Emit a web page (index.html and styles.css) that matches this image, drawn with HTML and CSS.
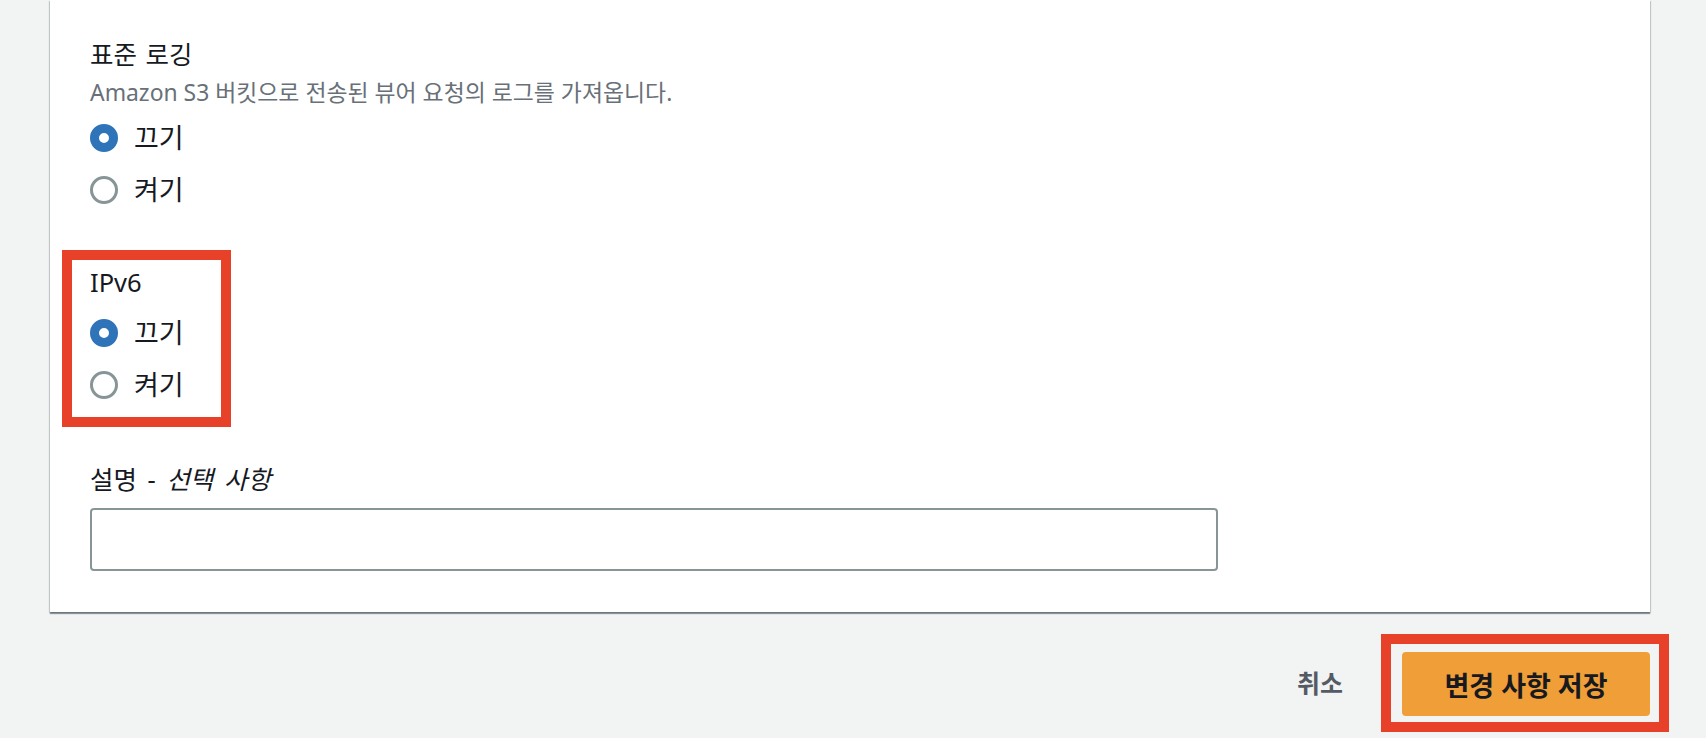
FILE: index.html
```html
<!DOCTYPE html>
<html lang="ko">
<head>
<meta charset="utf-8">
<title>배포 설정 편집</title>
<link rel="stylesheet" href="styles.css">
</head>
<body>
<div class="page">
  <section class="card">
    <div class="field">
      <div class="label">표준 로깅</div>
      <div class="desc">Amazon S3 버킷으로 전송된 뷰어 요청의 로그를 가져옵니다.</div>
      <div class="radios">
        <label class="radio-row"><input class="radio" type="radio" name="logging" checked><span>끄기</span></label>
        <label class="radio-row"><input class="radio" type="radio" name="logging"><span>켜기</span></label>
      </div>
    </div>

    <div class="field highlight">
      <div class="label">IPv6</div>
      <div class="radios tight">
        <label class="radio-row"><input class="radio" type="radio" name="ipv6" checked><span>끄기</span></label>
        <label class="radio-row"><input class="radio" type="radio" name="ipv6"><span>켜기</span></label>
      </div>
    </div>

    <div class="field comment">
      <div class="label label-wide">설명 - <em>선택 사항</em></div>
      <input class="text-input" type="text">
    </div>
  </section>

  <div class="actions">
    <button class="btn-link" type="button">취소</button>
    <div class="highlight-btn">
      <button class="btn-primary" type="button">변경 사항 저장</button>
    </div>
  </div>
</div>
</body>
</html>
```

FILE: styles.css
```css
html, body {
  margin: 0;
  padding: 0;
  height: 100%;
  overflow: hidden;
  background: #f2f3f3;
}

body {
  font-family: "Noto Sans", "Noto Sans CJK KR", sans-serif;
  color: #16191f;
}

.page {
  padding: 0 56px 0 50px;
}

.card {
  background: #ffffff;
  padding: 38px 40px 41px 40px;
  box-shadow: 0 2px 1px rgba(0, 28, 36, 0.4),
              1px 1px 1px rgba(0, 28, 36, 0.15),
              -1px 1px 1px rgba(0, 28, 36, 0.15);
}

.field {
  display: flex;
  flex-direction: column;
  align-items: flex-start;
}

.label {
  font-size: 25.5px;
  line-height: 32px;
  color: #16191f;
  word-spacing: 2px;
}

.label-wide {
  word-spacing: 4px;
}

.label em {
  font-style: italic;
}

.desc {
  margin-top: 8px;
  font-size: 22.9px;
  line-height: 30px;
  color: #687078;
}

.radios {
  margin-top: 4px;
  display: flex;
  flex-direction: column;
}

.radios.tight {
  margin-top: 9px;
}

.radio-row {
  height: 52px;
  display: flex;
  align-items: center;
  gap: 16px;
  font-size: 27px;
  line-height: 32px;
  color: #16191f;
}

.radio {
  appearance: none;
  -webkit-appearance: none;
  box-sizing: border-box;
  width: 28px;
  height: 28px;
  margin: 0;
  border-radius: 50%;
  border: 3px solid #879596;
  background: #ffffff;
}

.radio:checked {
  border: 9px solid #2f73b9;
}

.highlight {
  box-sizing: border-box;
  width: 169px;
  margin-top: 34px;
  margin-left: -28px;
  padding: 6px 10px 6px 18px;
  border: 10px solid #e8412a;
}

.comment {
  margin-top: 36px;
}

.text-input {
  box-sizing: border-box;
  margin-top: 13px;
  width: 1128px;
  height: 63px;
  border: 2px solid #879596;
  border-radius: 4px;
  background: #ffffff;
  outline: none;
}

.actions {
  margin-top: 22px;
  display: flex;
  justify-content: flex-end;
  align-items: center;
}

.btn-link {
  margin-right: 38px;
  padding: 0;
  border: none;
  background: none;
  font-family: "Noto Sans", "Noto Sans CJK KR", sans-serif;
  font-size: 25px;
  font-weight: 700;
  line-height: 32px;
  color: #545b64;
}

.highlight-btn {
  margin-right: -19px;
  padding: 8px 9px 6px 11px;
  border: 10px solid #e8412a;
}

.btn-primary {
  display: block;
  width: 248px;
  height: 64px;
  padding: 0;
  border: none;
  border-radius: 4px;
  background: #f09e38;
  font-family: "Noto Sans", "Noto Sans CJK KR", sans-serif;
  font-size: 27px;
  font-weight: 700;
  color: #16191f;
}
```
